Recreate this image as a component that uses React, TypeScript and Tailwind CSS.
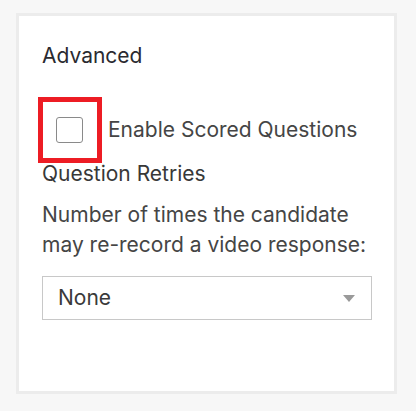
export default function App() {
  return (
    <div className="min-h-[411px] w-[416px] bg-[#f7f7f7] pl-[16px] pt-[13px] font-['Inter','Liberation_Sans',sans-serif]">
      <div className="relative flex h-[381px] w-[381px] flex-col border-[3px] border-[#ececec] bg-white pl-[23px] pr-[22px] pt-[25px]">
        <h2 className="text-[21px] leading-[30px] font-normal text-[#2a2a30]">Advanced</h2>

        <label className="mt-[44px] flex h-[30px] items-center">
          <span className="ml-[14px] h-[26px] w-[27px] rounded-[3px] border border-[#8a8a8a] bg-white" />
          <span className="ml-[25px] text-[21px] leading-[30px] text-[#454545]">Enable Scored Questions</span>
        </label>

        <h3 className="mt-[14px] text-[21px] leading-[30px] text-[#383838]">Question Retries</h3>

        <p className="mt-[11px] text-[21px] leading-[30px] text-[#454545]">
          Number of times the candidate
          <br />
          may re-record a video response:
        </p>

        <div className="mt-[16px] flex h-[44px] w-[330px] items-center justify-between border border-[#c8c8c8] pl-[15px] pr-[16px]">
          <span className="text-[21px] leading-[30px] text-[#3a3a3a]">None</span>
          <svg width="12" height="7" viewBox="0 0 12 7" className="mt-[1px]">
            <path d="M0 0 H12 L6 7 Z" fill="#9a9a9a" />
          </svg>
        </div>

        <div className="absolute left-[19px] top-[81px] h-[66px] w-[64px] border-[5px] border-[#ed1c24]" />
      </div>
    </div>
  );
}
